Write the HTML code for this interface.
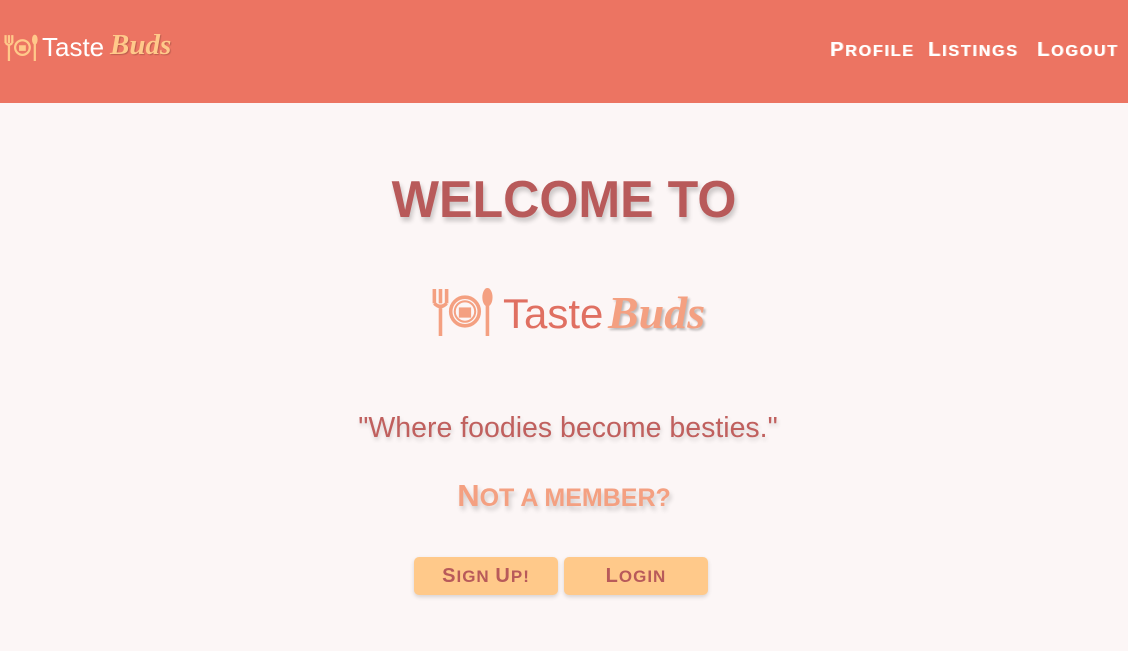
<!DOCTYPE html>
<html><head><meta charset="utf-8"><style>
*{margin:0;padding:0;box-sizing:border-box}
body{width:1128px;height:651px;background:#fcf6f6;font-family:"Liberation Sans",sans-serif;position:relative;overflow:hidden}
header{position:absolute;left:0;top:0;width:1128px;height:103px;background:#ec7462}
.sc{font-weight:900;text-transform:uppercase;position:absolute;white-space:nowrap}
.nav{color:#fff;font-size:16px;top:39px;text-shadow:1px 0 #f8c0b0;letter-spacing:1.8px}
.nav b,.bt b{font-size:20px}
.t{position:absolute;white-space:nowrap}
.bud{font-family:"Liberation Serif",serif;font-style:italic;font-weight:bold}
.btn{position:absolute;top:557px;width:144px;height:38px;background:#ffc98a;border-radius:5px;box-shadow:0 2px 4px rgba(0,0,0,.15);color:#b85a5a;font-weight:900;text-transform:uppercase;font-size:17px;text-align:center;line-height:38px;letter-spacing:1px}
</style></head><body>
<header>
<svg style="position:absolute;left:3px;top:34px" width="40" height="27" viewBox="0 0 70 48">
<g fill="none" stroke="#ffc98a" stroke-width="4"><path d="M4 2v14M10 2v14M16 2v14M4 16q6 6 12 0M10 18v30"/><circle cx="34" cy="24" r="13"/><path d="M56 18v30"/></g><ellipse cx="56" cy="10" rx="5" ry="9" fill="#ffc98a"/><rect x="28" y="20" width="12" height="10" fill="#ffc98a"/></svg>
<div class="t" style="left:42px;top:32px;font-size:26px;color:#fff">Taste</div>
<div class="t bud" style="left:110px;top:29px;font-size:29px;color:#ffc98a;text-shadow:1px 1px 1px rgba(0,0,0,.2)">Buds</div>
<div class="sc nav" style="left:830px"><b>P</b>rofile</div>
<div class="sc nav" style="left:928px"><b>L</b>istings</div>
<div class="sc nav" style="left:1037px"><b>L</b>ogout</div>
</header>
<div class="t" style="left:0;width:1128px;text-align:center;top:170px;font-size:52px;font-weight:900;color:#b85a5a;text-shadow:2px 4px 5px rgba(0,0,0,.2);transform:scaleX(0.965)">WELCOME TO</div>
<svg style="position:absolute;left:430px;top:287px" width="72" height="49" viewBox="0 0 70 48">
<g fill="none" stroke="#f4a081" stroke-width="3.5"><path d="M4 2v14M10 2v14M16 2v14M4 16q6 6 12 0M10 18v30"/><circle cx="34" cy="24" r="14"/><circle cx="34" cy="24" r="10" stroke-width="2"/><path d="M56 18v30"/></g><ellipse cx="56" cy="10" rx="5" ry="9" fill="#f4a081"/><rect x="28" y="20" width="12" height="10" fill="#f4a081"/></svg>
<div class="t" style="left:503px;top:290px;font-size:42px;color:#e07062">Taste</div>
<div class="t bud" style="left:608px;top:286px;font-size:46px;color:#f4a081;text-shadow:2px 2px 2px rgba(0,0,0,.25)">Buds</div>
<div class="t" style="left:4px;width:1128px;text-align:center;top:412px;font-size:28.5px;color:#c0605e;text-shadow:1px 3px 4px rgba(0,0,0,.15)">"Where foodies become besties."</div>
<div class="sc" style="left:0;width:1128px;text-align:center;top:478px;font-size:25px;color:#f4a081;text-shadow:2px 4px 5px rgba(0,0,0,.18)"><span style="font-size:31px">N</span>ot a member?</div>
<div class="btn bt" style="left:414px"><b>S</b>ign <b>U</b>p!</div>
<div class="btn bt" style="left:564px"><b>L</b>ogin</div>
</body></html>
